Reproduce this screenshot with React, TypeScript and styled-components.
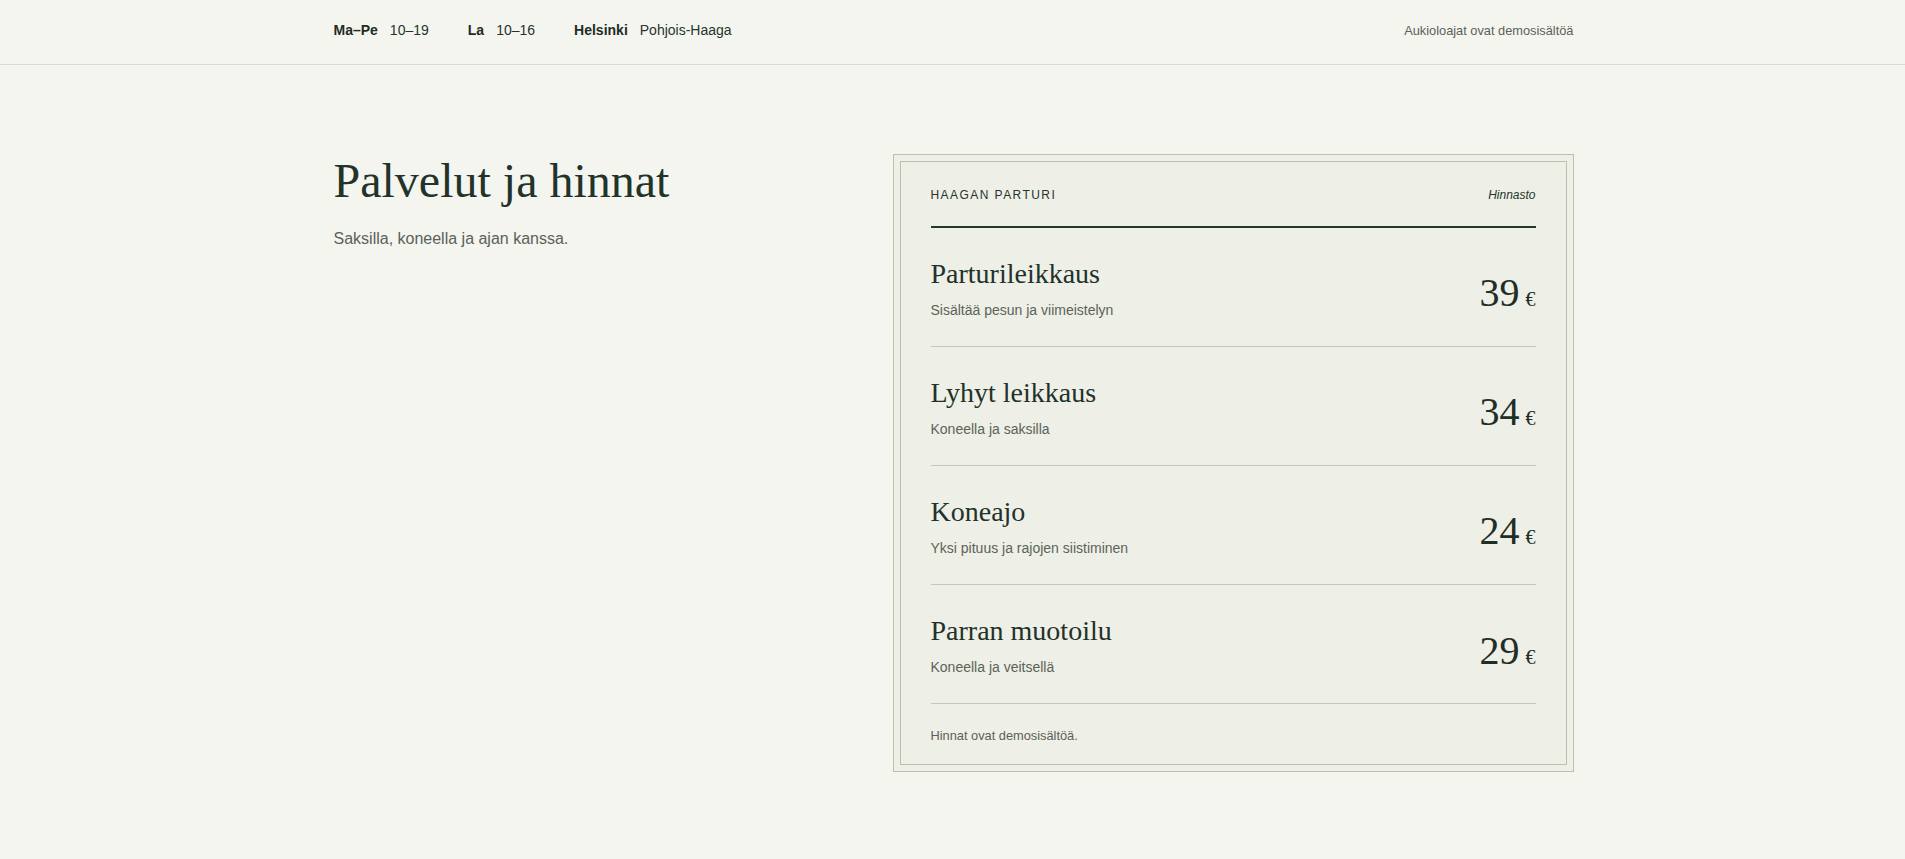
import styled, { createGlobalStyle } from 'styled-components'

const services = [
  { name: 'Parturileikkaus', note: 'Sisältää pesun ja viimeistelyn', price: 39 },
  { name: 'Lyhyt leikkaus', note: 'Koneella ja saksilla', price: 34 },
  { name: 'Koneajo', note: 'Yksi pituus ja rajojen siistiminen', price: 24 },
  { name: 'Parran muotoilu', note: 'Koneella ja veitsellä', price: 29 },
]

const hours = [
  { label: 'Ma–Pe', value: '10–19' },
  { label: 'La', value: '10–16' },
  { label: 'Helsinki', value: 'Pohjois-Haaga' },
]

export default function App() {
  return (
    <>
      <GlobalStyle />
      <TopBar>
        <Wrap>
          <TopInner>
            <InfoList>
              {hours.map((h) => (
                <InfoItem key={h.label}>
                  <InfoLabel>{h.label}</InfoLabel>
                  <span>{h.value}</span>
                </InfoItem>
              ))}
            </InfoList>
            <TopNote>Aukioloajat ovat demosisältöä</TopNote>
          </TopInner>
        </Wrap>
      </TopBar>

      <Main>
        <Wrap>
          <Layout>
            <Intro>
              <Title>Palvelut ja hinnat</Title>
              <Lead>Saksilla, koneella ja ajan kanssa.</Lead>
            </Intro>

            <Card>
              <CardInner>
                <CardHead>
                  <ShopName>Haagan Parturi</ShopName>
                  <CardTag>Hinnasto</CardTag>
                </CardHead>

                <List>
                  {services.map((s) => (
                    <Row key={s.name}>
                      <RowText>
                        <ServiceName>{s.name}</ServiceName>
                        <ServiceNote>{s.note}</ServiceNote>
                      </RowText>
                      <Price>
                        {s.price}
                        <Currency>€</Currency>
                      </Price>
                    </Row>
                  ))}
                </List>

                <CardFoot>Hinnat ovat demosisältöä.</CardFoot>
              </CardInner>
            </Card>
          </Layout>
        </Wrap>
      </Main>
    </>
  )
}

const GlobalStyle = createGlobalStyle`
  html, body {
    margin: 0;
    padding: 0;
    background: #f5f5f0;
  }

  body {
    font-family: "Liberation Sans", Arial, sans-serif;
    color: #23322a;
    -webkit-font-smoothing: antialiased;
  }

  * {
    box-sizing: border-box;
  }
`

const Wrap = styled.div`
  width: 1240px;
  margin-left: calc(50% - 619px);
`

const TopBar = styled.header`
  border-bottom: 1px solid #d9dad3;
  padding: 20px 0 23px;
`

const TopInner = styled.div`
  display: flex;
  align-items: baseline;
  justify-content: space-between;
`

const InfoList = styled.div`
  display: flex;
  align-items: baseline;
  gap: 39px;
  font-size: 14px;
  line-height: 1.5;
  color: #26342c;
`

const InfoItem = styled.div`
  display: flex;
  align-items: baseline;
  gap: 12px;
`

const InfoLabel = styled.span`
  font-weight: 700;
  color: #1f2c24;
`

const TopNote = styled.span`
  font-size: 12.8px;
  color: #5a6158;
`

const Main = styled.main`
  padding: 89px 0 88px;
`

const Layout = styled.div`
  display: grid;
  grid-template-columns: 1fr 681px;
  align-items: start;
  gap: 80px;
`

const Intro = styled.div`
  display: flex;
  flex-direction: column;
  padding-top: 1px;
`

const Title = styled.h1`
  margin: 0;
  font-family: "Liberation Serif", "Times New Roman", serif;
  font-size: 48px;
  font-weight: 400;
  line-height: 1.1;
  color: #22332a;
`

const Lead = styled.p`
  margin: 19px 0 0;
  font-size: 16px;
  line-height: 1.5;
  color: #5a6158;
`

const Card = styled.section`
  border: 1px solid #b9c1ae;
  padding: 6px;
  background: #eeefe6;
`

const CardInner = styled.div`
  border: 1px solid #b9c1ae;
  padding: 24px 30px 18px;
`

const CardHead = styled.div`
  display: flex;
  align-items: baseline;
  justify-content: space-between;
  padding-bottom: 22px;
  border-bottom: 2px solid #26362d;
  font-size: 12px;
  line-height: 1.5;
`

const ShopName = styled.span`
  text-transform: uppercase;
  letter-spacing: 0.12em;
  color: #25342c;
`

const CardTag = styled.span`
  font-style: italic;
  color: #25342c;
`

const List = styled.div`
  display: flex;
  flex-direction: column;
`

const Row = styled.div`
  display: flex;
  align-items: center;
  justify-content: space-between;
  padding: 29px 0 25.5px;
  border-bottom: 1px solid #c3c8b8;
`

const RowText = styled.div`
  display: flex;
  flex-direction: column;
  gap: 9px;
`

const ServiceName = styled.h3`
  margin: 0;
  font-family: "Liberation Serif", "Times New Roman", serif;
  font-size: 28px;
  font-weight: 400;
  line-height: 1.2;
  color: #22322a;
`

const ServiceNote = styled.p`
  margin: 0;
  font-size: 14px;
  line-height: 1.5;
  color: #5c6359;
`

const Price = styled.div`
  display: flex;
  align-items: baseline;
  gap: 6px;
  margin-top: 9px;
  font-family: "Liberation Serif", "Times New Roman", serif;
  font-size: 40px;
  line-height: 1;
  color: #1f2e26;
`

const Currency = styled.span`
  font-size: 20px;
`

const CardFoot = styled.p`
  margin: 0;
  padding-top: 22px;
  font-size: 12.8px;
  line-height: 1.5;
  color: #5a6158;
`
